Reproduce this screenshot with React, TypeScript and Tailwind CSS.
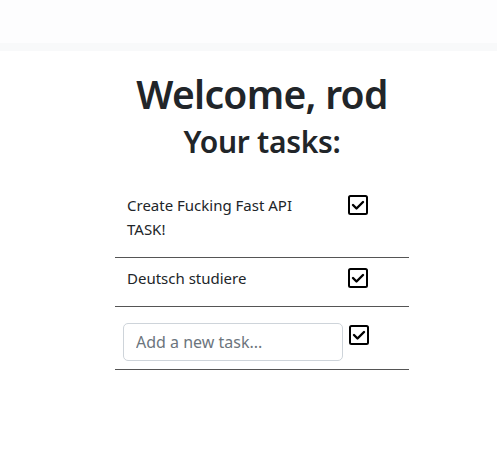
import React, { useState } from 'react';

type Task = { id: number; title: string };

const CheckBox = () => (
  <svg width="20" height="20" viewBox="0 0 20 20" className="block">
    <rect x="1" y="1" width="18" height="18" rx="1.5" fill="white" stroke="#000" strokeWidth="2" />
    <path d="M5 10 L8.5 13.5 L15 7" fill="none" stroke="#000" strokeWidth="2.4" strokeLinecap="round" strokeLinejoin="round" />
  </svg>
);

const App = () => {
  const [tasks] = useState<Task[]>([
    { id: 1, title: 'Create Fucking Fast API TASK!' },
    { id: 2, title: 'Deutsch studiere' },
  ]);
  const [newTask, setNewTask] = useState('');

  return (
    <div className="min-h-[451px] bg-white text-[#212529] font-['Noto_Sans',sans-serif]">
      <nav className="h-[43px] bg-[#fdfdfe]" />
      <div className="h-[8px] bg-[#f8f9fa]" />
      <main className="flex flex-col items-center pl-[27px]">
        <h1 className="mt-[19px] text-[39px] leading-[48px] font-semibold tracking-[-0.7px]">Welcome, rod</h1>
        <h2 className="mt-[5px] text-[30px] leading-[38px] font-semibold tracking-[-0.3px]">Your tasks:</h2>
        <div className="mt-[24px] w-[294px]">
          {tasks.map((task) => (
            <div key={task.id} className="flex border-b border-[#555]">
              <div className="w-[225px] px-3 pt-[8px] pb-[16px] text-[15px] leading-[24px]">{task.title}</div>
              <div className="pl-2 pt-[10px]">
                <button className="block">
                  <CheckBox />
                </button>
              </div>
            </div>
          ))}
          <div className="flex border-b border-[#555]">
            <div className="w-[233px] pl-2 pr-[5px] pt-4 pb-2">
              <input
                type="text"
                value={newTask}
                onChange={(e) => setNewTask(e.target.value)}
                placeholder="Add a new task..."
                className="w-full h-[38px] px-3 text-[16px] border border-[#ced4da] rounded-[5px] outline-none placeholder:text-[#6c757d]"
              />
            </div>
            <div className="pl-[1px] pt-[18px]">
              <button className="block">
                <CheckBox />
              </button>
            </div>
          </div>
        </div>
      </main>
    </div>
  );
};

export default App;
